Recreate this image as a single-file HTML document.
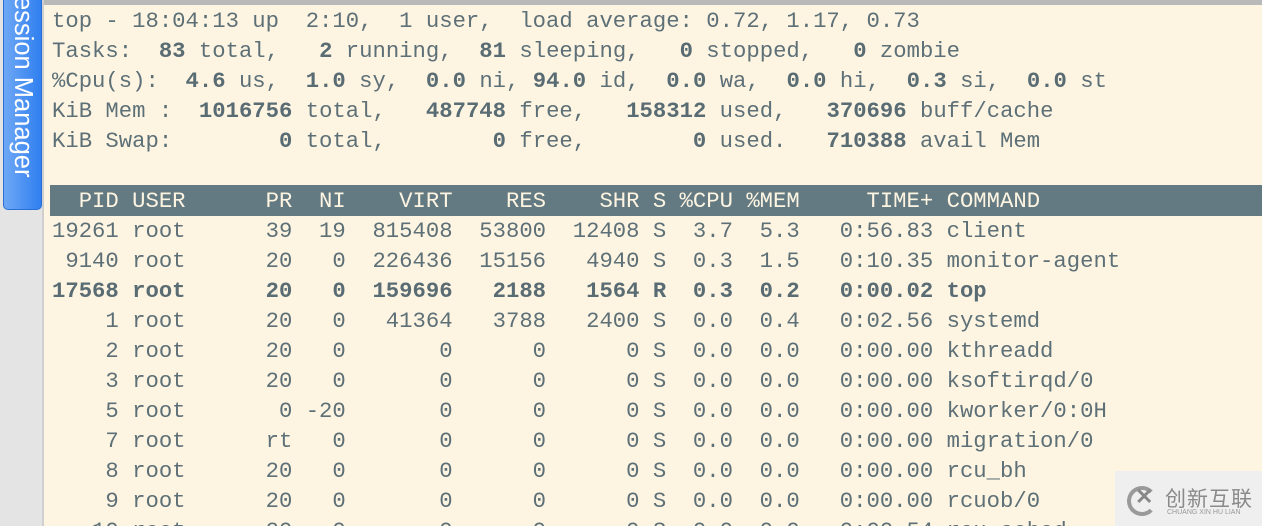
<!DOCTYPE html>
<html><head><meta charset="utf-8"><style>
html,body{margin:0;padding:0;}
body{width:1262px;height:526px;overflow:hidden;background:#e4e4e4;position:relative;font-family:"Liberation Sans",sans-serif;}
#tab{position:absolute;left:3px;top:-6px;width:39px;height:216px;background:linear-gradient(90deg,#6fa8f5,#2f7ff0);border-radius:0 0 5px 5px;border:1px solid #2a6fd6;box-sizing:border-box;overflow:hidden;}
#tab span{position:absolute;left:50%;top:0;transform-origin:0 0;transform:rotate(90deg) translate(0,-50%);white-space:nowrap;color:#fff;font-size:25.5px;line-height:28px;display:block;width:220px;margin-top:1px;}
#topband{position:absolute;left:44px;top:0;width:1218px;height:5px;background:#b9b9b9;}
#vline{position:absolute;left:42px;top:0;width:2px;height:526px;background:#cfcfcf;}
#term{position:absolute;left:44px;top:5px;width:1218px;height:521px;background:#fdf5e2;overflow:hidden;}
pre{margin:0;position:absolute;left:8px;top:1px;font-family:"Liberation Mono",monospace;font-size:22.25px;line-height:30px;color:#5e7077;}
b{font-weight:bold;color:#5a6c73;}
.hd{display:block;background:#647a82;color:#fdf5e2;margin-left:-2px;padding-left:2px;width:1220px;margin-top:-1px;padding-top:1px;}
#logo{position:absolute;left:1115px;top:471px;width:147px;height:55px;background:#efefef;}
#logo .c{position:absolute;left:12px;top:15px;width:22px;height:22px;border:4px solid #9a9a9a;border-radius:50%;border-right-color:transparent;}
#logo .x{position:absolute;left:20px;top:13px;font:bold 22px "Liberation Sans",sans-serif;color:#888;}
#logo .t{position:absolute;left:50px;top:12px;font:21px "Noto Sans CJK SC",sans-serif;color:#8a8a8a;letter-spacing:1px;}
#logo .s{position:absolute;left:52px;top:38px;font:7px "Liberation Sans",sans-serif;color:#999;}
</style></head><body>
<div id="tab"><span>ession Manager</span></div>
<div id="vline"></div>
<div id="topband"></div>
<div id="term"><pre>top - 18:04:13 up  2:10,  1 user,  load average: 0.72, 1.17, 0.73
Tasks: <b> 83</b> total, <b>  2</b> running, <b> 81</b> sleeping, <b>  0</b> stopped, <b>  0</b> zombie
%Cpu(s): <b> 4.6</b> us, <b> 1.0</b> sy, <b> 0.0</b> ni, <b>94.0</b> id, <b> 0.0</b> wa, <b> 0.0</b> hi, <b> 0.3</b> si, <b> 0.0</b> st
KiB Mem : <b> 1016756</b> total, <b>  487748</b> free, <b>  158312</b> used, <b>  370696</b> buff/cache
KiB Swap:<b>        0</b> total, <b>       0</b> free, <b>       0</b> used. <b>  710388</b> avail Mem

<span class="hd">  PID USER      PR  NI    VIRT    RES    SHR S %CPU %MEM     TIME+ COMMAND                                     </span>19261 root      39  19  815408  53800  12408 S  3.7  5.3   0:56.83 client
 9140 root      20   0  226436  15156   4940 S  0.3  1.5   0:10.35 monitor-agent
<b>17568 root      20   0  159696   2188   1564 R  0.3  0.2   0:00.02 top</b>
    1 root      20   0   41364   3788   2400 S  0.0  0.4   0:02.56 systemd
    2 root      20   0       0      0      0 S  0.0  0.0   0:00.00 kthreadd
    3 root      20   0       0      0      0 S  0.0  0.0   0:00.00 ksoftirqd/0
    5 root       0 -20       0      0      0 S  0.0  0.0   0:00.00 kworker/0:0H
    7 root      rt   0       0      0      0 S  0.0  0.0   0:00.00 migration/0
    8 root      20   0       0      0      0 S  0.0  0.0   0:00.00 rcu_bh
    9 root      20   0       0      0      0 S  0.0  0.0   0:00.00 rcuob/0
   10 root      20   0       0      0      0 S  0.0  0.0   0:00.54 rcu_sched</pre></div>
<div id="logo"><div class="c"></div><div class="x">✕</div><div class="t">创新互联</div><div class="s">CHUANG XIN HU LIAN</div></div>
</body></html>
